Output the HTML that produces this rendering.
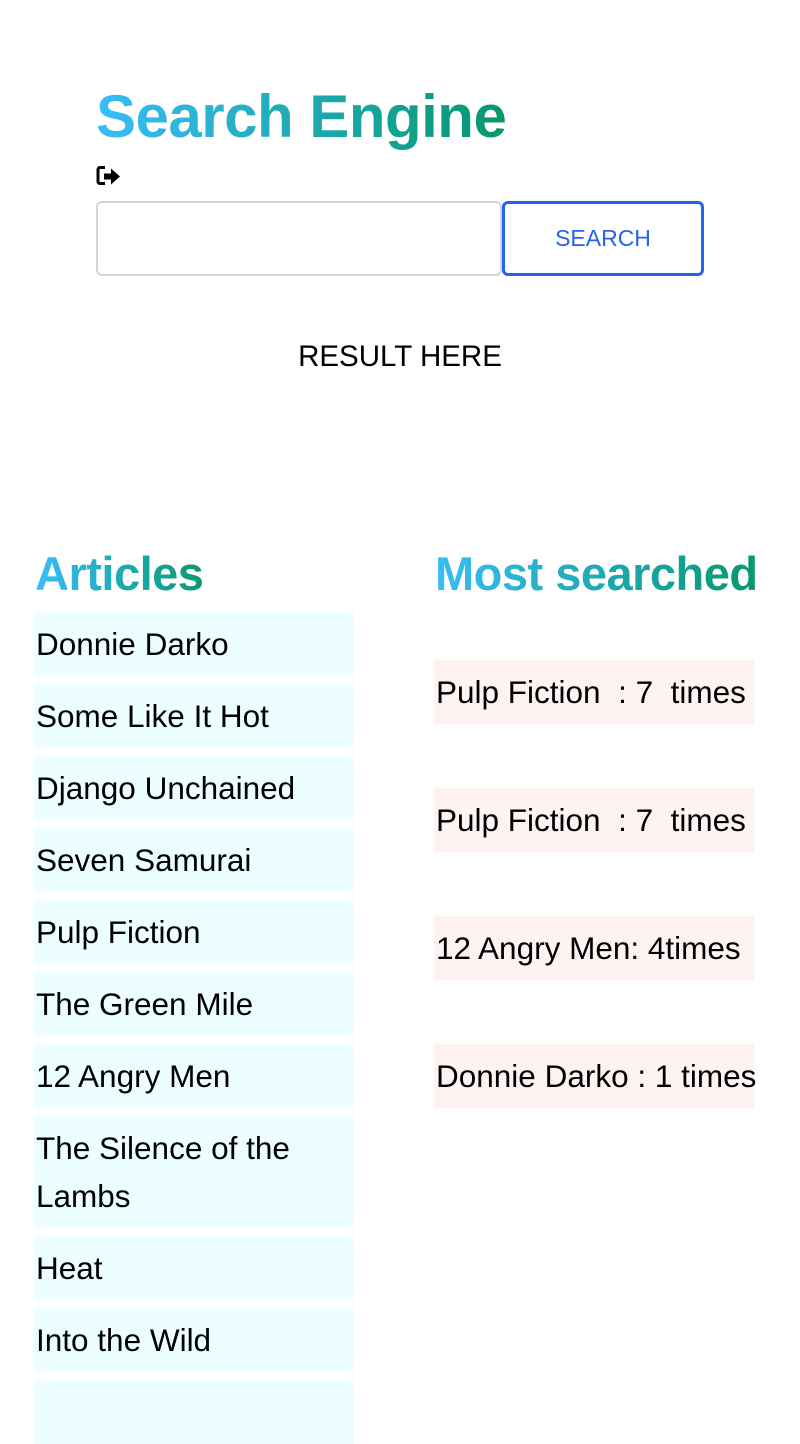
<!DOCTYPE html>
<html><head><style>
*{margin:0;padding:0;box-sizing:border-box}
body{width:800px;height:1400px;overflow:hidden;background:#fff;font-family:"Liberation Sans",sans-serif;color:#000;position:relative}
.grad{background:linear-gradient(90deg,#38bdf8,#059669);-webkit-background-clip:text;background-clip:text;color:transparent;font-weight:bold;position:absolute;white-space:nowrap}
.item{position:absolute;left:34px;width:320px;background:#ecfeff;font-size:31.5px;line-height:48px;padding:8px 2px}
.ms{position:absolute;left:434px;width:320px;height:64px;background:#fef2f2;font-size:31.5px;line-height:64px;padding-left:2px;white-space:pre;overflow:visible}
</style></head><body>
<div class="grad" style="left:96px;top:82px;font-size:60px;letter-spacing:-0.5px;line-height:70px;width:420px">Search Engine</div>
<svg style="position:absolute;left:96px;top:165px" width="28" height="23" viewBox="0 0 28 22"><path d="M9 2H4a2 2 0 0 0-2 2v12a2 2 0 0 0 2 2h5" fill="none" stroke="#000" stroke-width="3"/><path d="M8 8h7V3l9 8-9 8v-5H8z" fill="#000"/></svg>
<div style="position:absolute;left:96px;top:201px;width:406px;height:75px;border:2px solid #d1d5db;border-radius:6px"></div>
<div style="position:absolute;left:502px;top:201px;width:202px;height:75px;border:3px solid #2563eb;border-radius:6px;color:#2563eb;font-size:23px;text-align:center;line-height:69px">SEARCH</div>
<div style="position:absolute;left:0;width:800px;top:337px;text-align:center;font-size:29.5px;line-height:40px">RESULT HERE</div>
<div class="grad" style="left:35px;top:544px;font-size:47px;line-height:60px;letter-spacing:-0.5px;width:180px">Articles</div>
<div class="grad" style="left:435px;top:544px;font-size:47px;line-height:60px;letter-spacing:-0.5px;width:335px">Most searched</div>
<div class="item" style="top:612px;height:64px">Donnie Darko</div>
<div class="item" style="top:684px;height:64px">Some Like It Hot</div>
<div class="item" style="top:756px;height:64px">Django Unchained</div>
<div class="item" style="top:828px;height:64px">Seven Samurai</div>
<div class="item" style="top:900px;height:64px">Pulp Fiction</div>
<div class="item" style="top:972px;height:64px">The Green Mile</div>
<div class="item" style="top:1044px;height:64px">12 Angry Men</div>
<div class="item" style="top:1116px;height:112px">The Silence of the Lambs</div>
<div class="item" style="top:1236px;height:64px">Heat</div>
<div class="item" style="top:1308px;height:64px">Into the Wild</div>
<div class="item" style="top:1380px;height:64px"></div>
<div class="ms" style="top:660px">Pulp Fiction  : 7  times</div>
<div class="ms" style="top:788px">Pulp Fiction  : 7  times</div>
<div class="ms" style="top:916px">12 Angry Men: 4times</div>
<div class="ms" style="top:1044px">Donnie Darko : 1 times</div>
</body></html>
